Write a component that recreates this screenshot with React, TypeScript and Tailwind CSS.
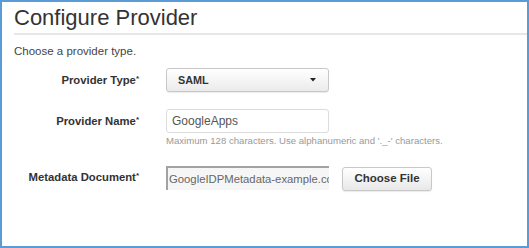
import React from 'react';

const Label: React.FC<{ text: string }> = ({ text }) => (
  <div className="w-[125px] shrink-0 h-[24px] flex items-center justify-end text-[11.3px] font-bold text-[#333]">
    <span>
      {text}
      <span className="text-[8px] align-[3px]">*</span>
    </span>
  </div>
);

const App: React.FC = () => (
  <div className="w-[529px] h-[248px] border-2 border-[#5b9bd5] bg-white overflow-hidden font-['Liberation_Sans',Arial,sans-serif]">
    <div className="flex flex-col pl-[12px] pt-[2px]">
      <h1 className="text-[22px] leading-[27px] text-[#333] font-normal">Configure Provider</h1>
      <div className="mt-[2px] h-[2px] bg-[#e6e6e6]" />
      <p className="mt-[9px] text-[11.5px] leading-[14px] text-[#444]">Choose a provider type.</p>

      {/* provider type */}
      <div className="mt-[10px] flex gap-[27px]">
        <Label text="Provider Type" />
        <div className="w-[163px] h-[24px] rounded-[3px] border border-[#c8c8c8] bg-gradient-to-b from-white to-[#ebebeb] shadow-[0_1px_1px_rgba(0,0,0,0.08)] flex items-center justify-between pl-[11px] pr-[12px]">
          <span className="text-[10.8px] font-bold text-[#333]">SAML</span>
          <svg width="6" height="4" viewBox="0 0 6 4">
            <path d="M0 0 H6 L3 3.5 Z" fill="#222" />
          </svg>
        </div>
      </div>

      {/* provider name */}
      <div className="mt-[17px] flex gap-[27px]">
        <Label text="Provider Name" />
        <div className="flex flex-col">
          <div className="w-[163px] h-[24px] rounded-[3px] border border-[#dcdcdc] bg-white flex items-center pl-[5px] text-[12px] text-[#555]">
            GoogleApps
          </div>
          <div className="mt-[2px] text-[9.6px] leading-[12px] text-[#999] whitespace-nowrap">
            Maximum 128 characters. Use alphanumeric and '._-' characters.
          </div>
        </div>
      </div>

      {/* metadata document */}
      <div className="mt-[18px] flex gap-[27px]">
        <Label text="Metadata Document" />
        <div className="flex items-center gap-[13px]">
          <div className="w-[163px] h-[24px] border-t-2 border-l-2 border-[#a3a3a3] bg-[#f6f6f6] flex items-center pl-[1px] overflow-hidden whitespace-nowrap text-[11.3px] text-[#666]">
            GoogleIDPMetadata-example.com
          </div>
          <button className="w-[90px] h-[24px] mt-[2px] rounded-[3px] border border-[#c8c8c8] bg-gradient-to-b from-white to-[#e8e8e8] shadow-[0_1px_1px_rgba(0,0,0,0.08)] text-[11.5px] font-bold text-[#333]">
            Choose File
          </button>
        </div>
      </div>
    </div>
  </div>
);

export default App;
